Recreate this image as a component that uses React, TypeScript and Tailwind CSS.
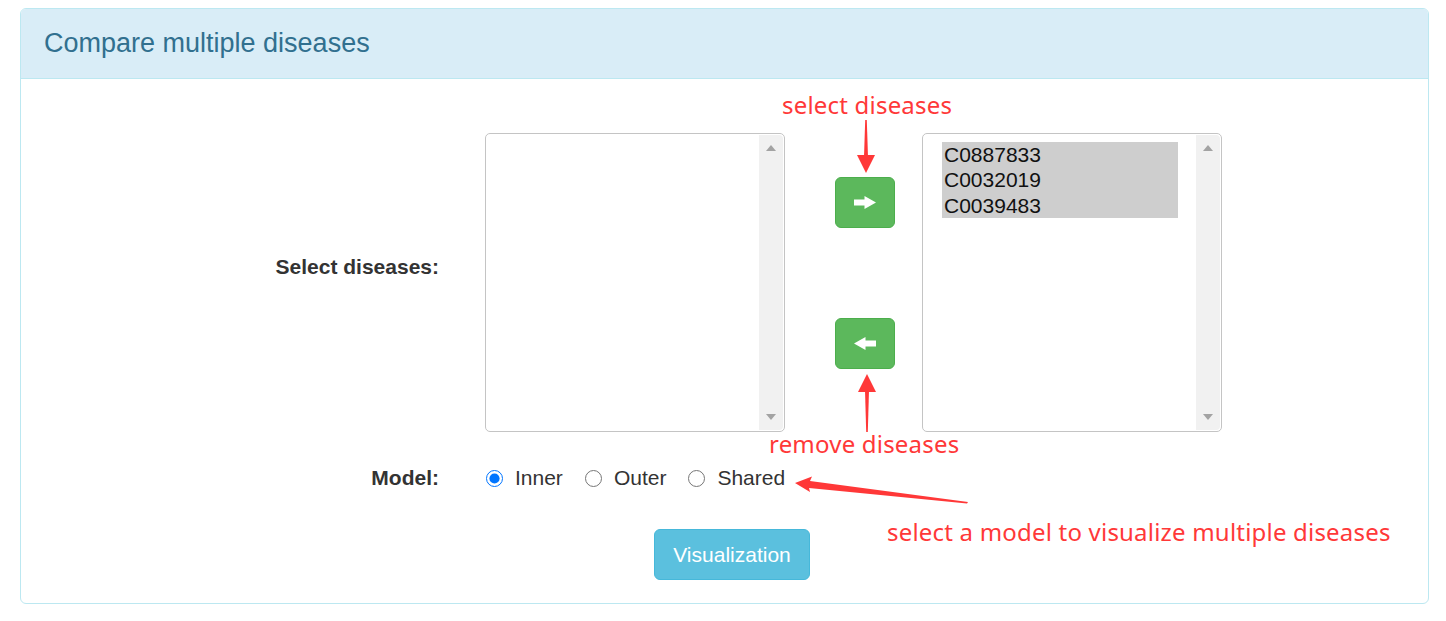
import { useState } from "react";

const selected = ["C0887833", "C0032019", "C0039483"];

function Scrollbar() {
  return (
    <div className="absolute right-[1px] top-[1px] bottom-[1px] w-[24px] bg-[#f1f1f1] rounded-r-[4px] flex flex-col items-center justify-between py-[10px]">
      <svg width="10" height="6" viewBox="0 0 10 6"><polygon points="0,6 5,0 10,6" fill="#a3a3a3" /></svg>
      <svg width="10" height="6" viewBox="0 0 10 6"><polygon points="0,0 10,0 5,6" fill="#a3a3a3" /></svg>
    </div>
  );
}

function ListBox({ items }: { items: string[] }) {
  return (
    <div className="relative w-[300px] h-[299px] border border-[#c4c4c4] rounded-[5px] bg-white">
      <div className="pt-[8px] pl-[19px]">
        {items.map((it) => (
          <div key={it} className="w-[236px] h-[25.4px] leading-[25.4px] bg-[#cecece] pl-[2px] text-[21px] text-[#111]">
            {it}
          </div>
        ))}
      </div>
      <Scrollbar />
    </div>
  );
}

function ArrowBtn({ dir }: { dir: "right" | "left" }) {
  return (
    <button className="w-[60px] h-[51px] rounded-[6px] bg-[#5cb85c] border border-[#4cae4c] flex items-center justify-center">
      <svg width="22" height="13" viewBox="0 0 22 13" className={dir === "left" ? "rotate-180" : ""}>
        <polygon points="0,3.5 10.5,3.5 10.5,0 22,6.5 10.5,13 10.5,9.5 0,9.5" fill="#fff" />
      </svg>
    </button>
  );
}

export default function App() {
  const [model, setModel] = useState("Inner");
  return (
    <div className="relative w-[1446px] h-[621px] bg-white pt-[8px] pl-[20px] font-['Liberation_Sans',Arial,sans-serif] text-[#333]">
      <div className="w-[1409px] border border-[#bce8f1] rounded-[6px] overflow-hidden">
        <div className="h-[70px] bg-[#d9edf7] border-b border-[#bce8f1] px-[23px] flex items-center">
          <h3 className="text-[27px] text-[#31708f] leading-none pb-[1px]">Compare multiple diseases</h3>
        </div>
        <div className="pt-[54px] pb-[23px]">
          <div className="flex">
            <label className="w-[418px] text-right font-bold text-[21px] leading-[24px] mt-[122px]">Select diseases:</label>
            <div className="ml-[46px]">
              <ListBox items={[]} />
            </div>
            <div className="ml-[50px] mr-[27px] flex flex-col pt-[44px] gap-[90px]">
              <ArrowBtn dir="right" />
              <ArrowBtn dir="left" />
            </div>
            <ListBox items={selected} />
          </div>

          <div className="flex items-center h-[30px] mt-[31px]">
            <label className="w-[418px] text-right font-bold text-[21px]">Model:</label>
            <div className="ml-[47px] flex items-center text-[21px]">
              {["Inner", "Outer", "Shared"].map((m) => (
                <label key={m} className="flex items-center mr-[22px]">
                  <input
                    type="radio"
                    name="model"
                    checked={model === m}
                    onChange={() => setModel(m)}
                    className="w-[17px] h-[17px] m-0 accent-[#0075ff]"
                  />
                  <span className="ml-[12px]">{m}</span>
                </label>
              ))}
            </div>
          </div>

          <div className="mt-[36px] ml-[633px]">
            <button className="w-[156px] h-[51px] rounded-[6px] bg-[#5bc0de] border border-[#46b8da] text-white text-[21px]">
              Visualization
            </button>
          </div>
        </div>
      </div>

      {/* annotations */}
      <div className="pointer-events-none absolute inset-0 font-['Noto_Sans',sans-serif] text-[#ff3838] text-[24px] tracking-[0.2px] leading-none">
        <span className="absolute left-[782px] top-[93px]">select diseases</span>
        <span className="absolute left-[769px] top-[432px]">remove diseases</span>
        <span className="absolute left-[887px] top-[520px]">select a model to visualize multiple diseases</span>
        <svg className="absolute inset-0" width="1446" height="621">
          <polygon points="865.2,120 866.8,120 868,157 864,157" fill="#ff3838" />
          <polygon points="857,155 875,155 866,173" fill="#ff3838" />
          <polygon points="858,392 876,392 867,374" fill="#ff3838" />
          <polygon points="865,390 869,390 867.8,432 866.2,432" fill="#ff3838" />
          <polygon points="795,483 812,476.5 810,481 968,502 967,503.5 809,488 810,492" fill="#ff3838" />
        </svg>
      </div>
    </div>
  );
}
